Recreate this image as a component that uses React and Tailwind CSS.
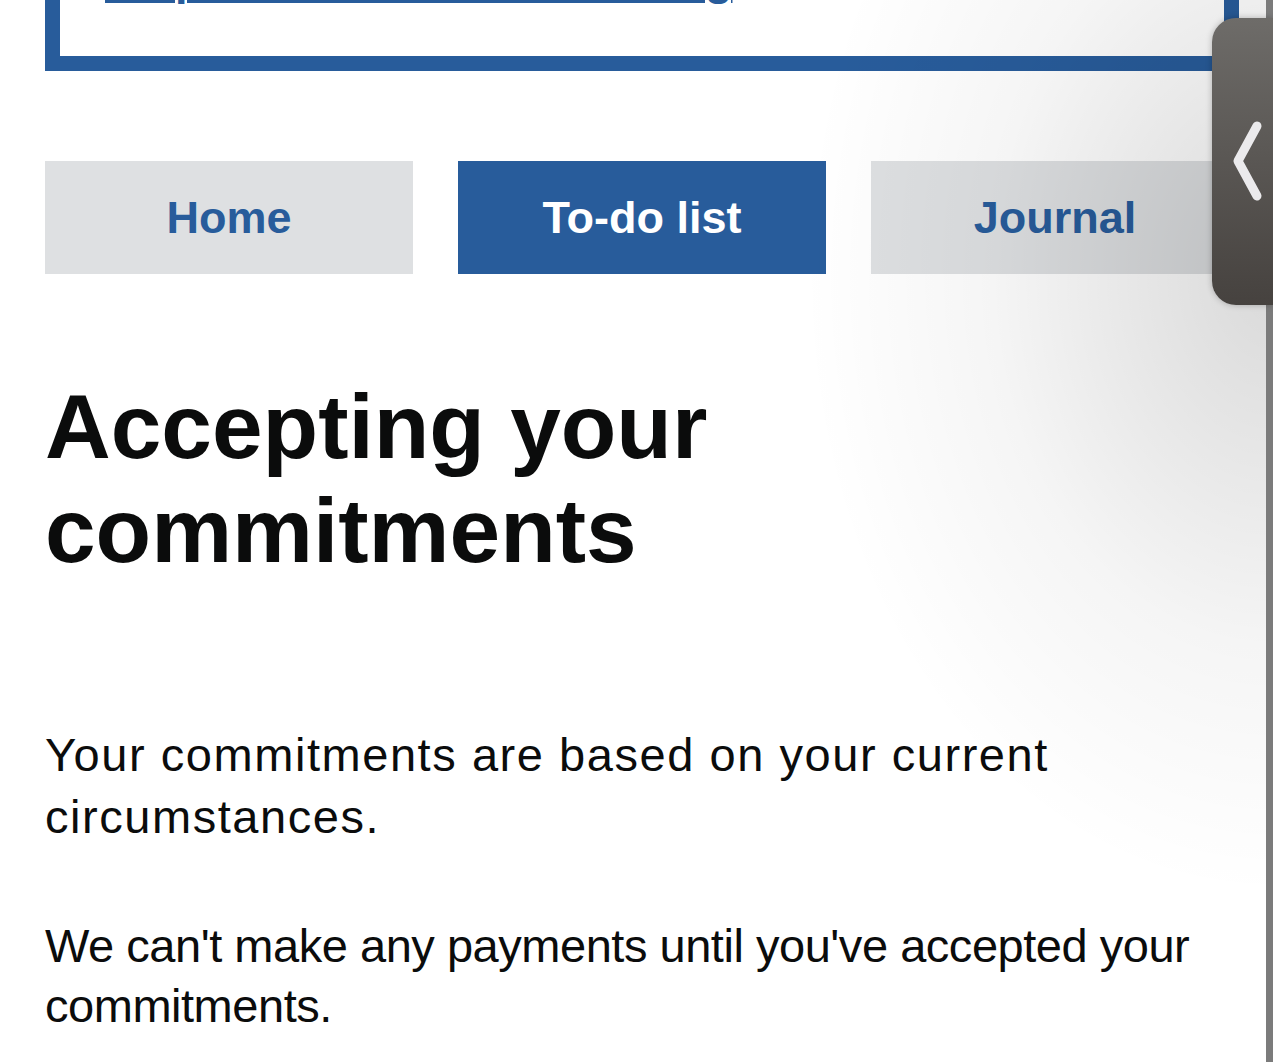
import React from "react";

const tabs = [
  { label: "Home", active: false },
  { label: "To-do list", active: true },
  { label: "Journal", active: false },
];

const App = () => {
  return (
    <div className="relative h-screen overflow-hidden bg-white pl-[45px] pr-[34px] font-['Liberation_Sans',Arial,sans-serif] text-[#0b0c0c]">
      {/* Notification box (top cut off) */}
      <div className="flex h-[71px] items-end overflow-hidden border-x-[15px] border-b-[15px] border-[#285c9b] pb-[51px] pl-[45px]">
        <a
          href="#"
          className="block whitespace-nowrap text-[45px] font-bold leading-[50px] text-[#285c9b] underline decoration-[3px] underline-offset-[5px]"
        >
          Help with the cost of housing
        </a>
      </div>

      {/* Tabs */}
      <nav className="mt-[90px] grid grid-cols-3 gap-[45px]">
        {tabs.map((tab) => (
          <a
            key={tab.label}
            href="#"
            className={
              tab.active
                ? "flex h-[113px] items-center justify-center bg-[#285c9b] text-[45px] font-bold text-white"
                : "flex h-[113px] items-center justify-center bg-[#dee0e2] text-[45px] font-bold text-[#285c9b]"
            }
          >
            {tab.label}
          </a>
        ))}
      </nav>

      {/* Heading */}
      <h1 className="mt-[101px] text-[91px] font-bold leading-[104px]">
        Accepting your
        <br />
        commitments
      </h1>

      <p className="mt-[141px] text-[47px] leading-[62px] tracking-[0.033em]">
        Your commitments are based on your current circumstances.
      </p>
      <p className="mt-[68px] text-[47px] leading-[60px] tracking-[-0.01em]">
        We can't make any payments until you've accepted your commitments.
      </p>

      {/* Page-edge shading */}
      <div className="pointer-events-none absolute inset-0 bg-[radial-gradient(ellipse_470px_620px_at_100%_26%,rgba(0,0,0,0.15),rgba(0,0,0,0.04)_60%,rgba(0,0,0,0))]" />

      {/* Right edge strip */}
      <div className="absolute right-0 top-0 h-full w-[7px] bg-[#7b7b7b]" />

      {/* Side panel handle */}
      <button
        type="button"
        className="absolute right-0 top-[18px] flex h-[287px] w-[61px] items-start rounded-l-[24px] bg-gradient-to-b from-[#6e6c69] to-[#46423f] shadow-[0_0_6px_rgba(0,0,0,0.25)]"
      >
        <svg
          width="61"
          height="287"
          viewBox="0 0 61 287"
          fill="none"
          className="block"
        >
          <path
            d="M45 108 L26 143 L45 178"
            stroke="#ebeaec"
            strokeWidth="9"
            strokeLinecap="round"
            strokeLinejoin="round"
          />
        </svg>
      </button>
    </div>
  );
};

export default App;
